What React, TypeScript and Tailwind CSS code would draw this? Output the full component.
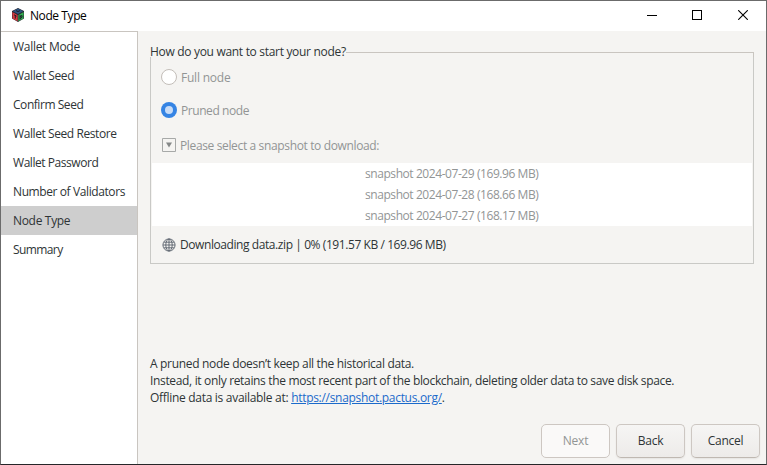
const steps = [
  { label: "Wallet Mode", spacing: "tracking-[-0.29px]" },
  { label: "Wallet Seed", spacing: "tracking-[-0.38px]" },
  { label: "Confirm Seed", spacing: "tracking-[-0.45px]" },
  { label: "Wallet Seed Restore", spacing: "tracking-[-0.42px]" },
  { label: "Wallet Password", spacing: "tracking-[-0.45px]" },
  { label: "Number of Validators", spacing: "tracking-[-0.4px]" },
  { label: "Node Type", spacing: "tracking-[-0.32px]" },
  { label: "Summary", spacing: "tracking-[-0.6px]" },
];

const snapshots = [
  "snapshot 2024-07-29 (169.96 MB)",
  "snapshot 2024-07-28 (168.66 MB)",
  "snapshot 2024-07-27 (168.17 MB)",
];

function AppLogo() {
  return (
    <svg width="12" height="14" viewBox="0 0 12 14">
      <path d="M6 0 12 3v7.6L6 14 0 10.6V3Z" fill="#2a2733" />
      <path d="M6 .6 11.2 3.2 6 5.9 .8 3.2Z" fill="#2d5580" />
      <path d="M.3 4 5.6 6.9v6.4L.6 10.4Z" fill="#d83b40" />
      <path d="M11.7 4 6.4 6.9v6.4l5-2.9Z" fill="#30b04f" />
      <path d="M4 2.6 6 3.6l2-1M2 6.8l2.6 1.4M3.3 7.6v3M8 7.2v4.3M8 8.6l2-1.1v1.8L8 10.5" fill="none" stroke="#1d1d28" strokeWidth="1" />
    </svg>
  );
}

function Globe() {
  return (
    <svg width="14" height="14" viewBox="0 0 14 14" fill="none" stroke="#59616c" strokeWidth=".9">
      <circle cx="7" cy="7" r="6.1" />
      <ellipse cx="7" cy="7" rx="3.2" ry="6" />
      <path d="M7 1v12M1 7h12M2 4.2h10M2 9.8h10" />
    </svg>
  );
}

export default function App() {
  return (
    <div className="flex h-[465px] w-[767px] flex-col overflow-hidden border border-[#6b6b6b] border-b-[#262629] bg-[#f5f4f2] font-['Open_Sans','Noto_Sans',sans-serif] text-[12px] leading-[17px] text-[#2e3436]">
      <header className="flex h-[30px] shrink-0 items-center bg-white text-black">
        <div className="flex w-[29px] justify-end pr-[6px] pb-[2px]"><AppLogo /></div>
        <h1 className="-mt-px whitespace-nowrap tracking-[-0.42px]">Node Type</h1>
        <div className="ml-auto flex pb-[2px]">
          <div className="flex w-[45px] justify-center">
            <svg width="10" height="10" viewBox="0 0 10 10" shapeRendering="crispEdges"><path d="M0 5.5h10" stroke="black" /></svg>
          </div>
          <div className="flex w-[45px] justify-center">
            <svg width="10" height="10" viewBox="0 0 10 10" shapeRendering="crispEdges"><path d="M.5.5h9v9h-9Z" fill="none" stroke="black" /></svg>
          </div>
          <div className="flex w-[47px] justify-center pl-px">
            <svg width="10" height="10" viewBox="0 0 10 10"><path d="m.2.2 9.6 9.6m0-9.6L.2 9.8" stroke="black" strokeWidth="1.1" /></svg>
          </div>
        </div>
      </header>

      <div className="flex min-h-0 flex-1">
        <nav className="w-[137px] shrink-0 border-t border-r border-[#c9c5c0] bg-white">
          {steps.map((step) => (
            <div key={step.label} className={`flex h-[29px] items-center pl-[12px] whitespace-nowrap ${step.spacing} ${step.label === "Node Type" ? "bg-[#cecece]" : ""}`}>
              {step.label}
            </div>
          ))}
        </nav>

        <main className="flex min-w-0 flex-1 flex-col pt-[14px] pr-[6px] pl-[12px]">
          <section className="w-[604px]">
            <div className="flex h-[12px]">
              <h2 className="-mt-[2px] whitespace-nowrap tracking-[-0.31px]">How do you want to start your node?</h2>
              <div className="mt-[7px] h-[5px] flex-1 border-t border-r border-[#c9c5c0]" />
            </div>
            <div className="flex h-[207px] flex-col border-x border-b border-[#c9c9c6]">
              <div className="flex h-[33px] items-center gap-[4px] pt-[7px] pl-[10px] text-[#929595]">
                <span className="size-[16px] rounded-full border border-[#c3beb9] bg-white" />
                <span className="tracking-[-0.22px]">Full node</span>
              </div>
              <div className="flex h-[33px] items-center gap-[4px] pt-[7px] pl-[10px] text-[#929595]">
                <span className="flex size-[16px] items-center justify-center rounded-full bg-[#3584e4]"><span className="size-[8px] rounded-full bg-[#c8dcf7]" /></span>
                <span className="tracking-[-0.43px]">Pruned node</span>
              </div>
              <div className="flex h-[40px] items-center gap-[4px] pt-[4px] pl-[11px] text-[#929595]">
                <svg width="14" height="14" viewBox="0 0 14 14"><path d="M.5.5h13v13H.5Z" fill="none" stroke="#a7a9a8" /><path d="M4 4.5h6L7 9.5Z" fill="#858888" /></svg>
                <span className="tracking-[-0.36px]">Please select a snapshot to download:</span>
              </div>
              <div className="mx-px h-[63px] bg-white text-[#929595]">
                {snapshots.map((snapshot) => (
                  <div key={snapshot} className="flex h-[21px] items-center pl-[213px] whitespace-nowrap tracking-[-0.43px]">{snapshot}</div>
                ))}
              </div>
              <div className="flex h-[37px] items-center gap-[4px] pl-[11px]">
                <Globe />
                <span className="whitespace-nowrap tracking-[-0.42px]">Downloading data.zip | 0% (191.57 KB / 169.96 MB)</span>
              </div>
            </div>
          </section>

          <div className="mt-[91px] whitespace-nowrap">
            <p className="tracking-[-0.32px]">A pruned node doesn’t keep all the historical data.</p>
            <p className="tracking-[-0.335px]">Instead, it only retains the most recent part of the blockchain, deleting older data to save disk space.</p>
            <p className="tracking-[-0.3px]">Offline data is available at: <a href="https://snapshot.pactus.org/" className="text-[#1b6acb] underline">https://snapshot.pactus.org/</a>.</p>
          </div>

          <div className="mt-[18px] flex justify-end gap-[6px]">
            <button disabled className="h-[34px] w-[69px] rounded-[5px] border border-[#cdc7c2] bg-[#faf9f8] pb-px tracking-[-0.2px] text-[#929595]">Next</button>
            <button className="h-[34px] w-[69px] rounded-[5px] border border-[#cdc7c2] border-b-[#bfb8b1] bg-linear-to-b from-[#f6f5f4] to-[#edebe9] pb-px tracking-[-0.25px] shadow-[0_1px_2px_rgba(0,0,0,0.07)]">Back</button>
            <button className="h-[34px] w-[69px] rounded-[5px] border border-[#cdc7c2] border-b-[#bfb8b1] bg-linear-to-b from-[#f6f5f4] to-[#edebe9] pb-px tracking-[-0.25px] shadow-[0_1px_2px_rgba(0,0,0,0.07)]">Cancel</button>
          </div>
        </main>
      </div>
    </div>
  );
}
